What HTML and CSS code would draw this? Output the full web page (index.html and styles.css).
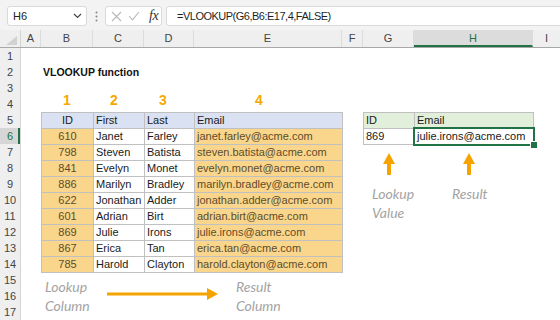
FILE: index.html
```html
<!DOCTYPE html>
<html>
<head>
<meta charset="utf-8">
<link rel="stylesheet" href="styles.css">
</head>
<body>
<div class="app">
  <div class="fbar">
    <div class="namebox"><span>H6</span>
      <svg class="chev" width="9" height="6" viewBox="0 0 9 6"><path d="M1 1 L4.5 4.5 L8 1" fill="none" stroke="#444" stroke-width="1.2"/></svg>
    </div>
    <div class="grip"><svg width="3" height="11" viewBox="0 0 3 11"><circle cx="1.5" cy="1.5" r="1" fill="#888"/><circle cx="1.5" cy="5.5" r="1" fill="#888"/><circle cx="1.5" cy="9.5" r="1" fill="#888"/></svg></div>
    <div class="fxbox">
      <svg width="11" height="11" viewBox="0 0 11 11"><path d="M1 1 L10 10 M10 1 L1 10" stroke="#b8b8b8" stroke-width="1.1"/></svg>
      <svg width="12" height="10" viewBox="0 0 12 10"><path d="M1 5 L4.5 8.8 L11 1" fill="none" stroke="#b8b8b8" stroke-width="1.1"/></svg>
      <span class="fx">fx</span>
    </div>
    <div class="formula">=VLOOKUP(G6,B6:E17,4,FALSE)</div>
  </div>
  <div class="colheads">
    <div class="corner"><span class="tri"></span></div>
    <div class="ch wa">A</div>
    <div class="ch wb">B</div>
    <div class="ch wc">C</div>
    <div class="ch wd">D</div>
    <div class="ch we">E</div>
    <div class="ch wf">F</div>
    <div class="ch wg">G</div>
    <div class="ch wh active">H</div>
    <div class="ch wi">I</div>
  </div>
  <div class="body">
    <div class="rowheads">
      <div class="rh">1</div><div class="rh">2</div><div class="rh">3</div><div class="rh">4</div>
      <div class="rh">5</div><div class="rh active">6</div><div class="rh">7</div><div class="rh">8</div>
      <div class="rh">9</div><div class="rh">10</div><div class="rh">11</div><div class="rh">12</div>
      <div class="rh">13</div><div class="rh">14</div><div class="rh">15</div><div class="rh">16</div>
      <div class="rh">17</div>
    </div>
    <div class="canvas">
      <div class="title">VLOOKUP function</div>
      <div class="num n1">1</div>
      <div class="num n2">2</div>
      <div class="num n3">3</div>
      <div class="num n4">4</div>

      <div class="dtable">
        <div class="c h ctr">ID</div><div class="c h">First</div><div class="c h">Last</div><div class="c h">Email</div>
        <div class="c o ctr">610</div><div class="c">Janet</div><div class="c">Farley</div><div class="c o">janet.farley@acme.com</div>
        <div class="c o ctr">798</div><div class="c">Steven</div><div class="c">Batista</div><div class="c o">steven.batista@acme.com</div>
        <div class="c o ctr">841</div><div class="c">Evelyn</div><div class="c">Monet</div><div class="c o">evelyn.monet@acme.com</div>
        <div class="c o ctr">886</div><div class="c">Marilyn</div><div class="c">Bradley</div><div class="c o">marilyn.bradley@acme.com</div>
        <div class="c o ctr">622</div><div class="c">Jonathan</div><div class="c">Adder</div><div class="c o">jonathan.adder@acme.com</div>
        <div class="c o ctr">601</div><div class="c">Adrian</div><div class="c">Birt</div><div class="c o">adrian.birt@acme.com</div>
        <div class="c o ctr">869</div><div class="c">Julie</div><div class="c">Irons</div><div class="c o">julie.irons@acme.com</div>
        <div class="c o ctr">867</div><div class="c">Erica</div><div class="c">Tan</div><div class="c o">erica.tan@acme.com</div>
        <div class="c o ctr">785</div><div class="c">Harold</div><div class="c">Clayton</div><div class="c o">harold.clayton@acme.com</div>
      </div>

      <div class="rtable">
        <div class="c g">ID</div><div class="c g">Email</div>
        <div class="c">869</div><div class="c sel">julie.irons@acme.com</div>
      </div>

      <div class="overlay">
        <svg class="arr-h" width="112" height="12" viewBox="0 0 112 12"><rect x="0" y="4.5" width="101" height="3" fill="#f5a300"/><polygon points="100,0 111,6 100,12" fill="#f5a300"/></svg>
        <svg class="arr-u u1" width="12" height="22" viewBox="0 0 12 22"><polygon points="6,0 12,11 0,11" fill="#f5a300"/><rect x="4" y="10" width="4" height="12" fill="#f5a300"/></svg>
        <svg class="arr-u u2" width="12" height="22" viewBox="0 0 12 22"><polygon points="6,0 12,11 0,11" fill="#f5a300"/><rect x="4" y="10" width="4" height="12" fill="#f5a300"/></svg>
        <div class="note lk-col">Lookup<br>Column</div>
        <div class="note rs-col">Result<br>Column</div>
        <div class="note lk-val">Lookup<br>Value</div>
        <div class="note rs">Result</div>
      </div>
    </div>
  </div>
</div>
</body>
</html>
```

FILE: styles.css
```css
* { box-sizing: border-box; margin: 0; padding: 0; }
body {
  margin: 0;
  width: 560px;
  height: 320px;
  overflow: hidden;
  background: #fff;
  font-family: "Liberation Sans", Arial, sans-serif;
  font-size: 11px;
  color: #222;
}
.app { width: 560px; height: 320px; overflow: hidden; }

/* formula bar */
.fbar {
  height: 30px;
  background: #f3f3f3;
  display: flex;
  align-items: flex-start;
  padding: 6px 0 0 7px;
}
.namebox {
  width: 80px;
  height: 20px;
  background: #fff;
  border: 1px solid #dadada;
  border-radius: 3px;
  display: flex;
  align-items: center;
  justify-content: space-between;
  padding: 0 4px 0 5px;
  font-size: 11px;
  color: #222;
}
.grip {
  width: 18px;
  height: 20px;
  display: flex;
  align-items: center;
  justify-content: center;
}
.fxbox {
  width: 57px;
  height: 20px;
  background: #fff;
  border: 1px solid #dadada;
  border-radius: 3px;
  display: flex;
  align-items: center;
  gap: 6px;
  padding-left: 5px;
}
.fx {
  font-family: "Liberation Serif", serif;
  font-style: italic;
  font-size: 14px;
  color: #333;
  margin-left: 3px;
  letter-spacing: -0.5px;
}
.formula {
  flex: 1;
  margin-left: 4px;
  margin-right: -4px;
  height: 20px;
  background: #fff;
  border: 1px solid #dadada;
  border-radius: 3px 0 0 3px;
  padding-left: 10px;
  line-height: 18px;
  font-size: 11px;
  letter-spacing: -0.5px;
  color: #1f1f1f;
}

/* column headers */
.colheads {
  display: flex;
  height: 18px;
  background: #efefef;
  border-bottom: 1px solid #a8a8a8;
}
.corner {
  width: 21px;
  flex: none;
  border-right: 1px solid #d4d4d4;
  display: flex;
  align-items: flex-end;
  justify-content: flex-end;
  padding: 0 3px 2px 0;
}
.tri {
  width: 0;
  height: 0;
  border-left: 11px solid transparent;
  border-bottom: 9px solid #d2d2d2;
}
.ch {
  flex: none;
  text-align: center;
  line-height: 17px;
  color: #444;
  border-right: 1px solid #dcdcdc;
}
.ch.active {
  background: #dcdcdc;
  color: #217346;
  border-bottom: 2px solid #217346;
  line-height: 16px;
}
.wa { width: 20px; }
.wb { width: 52px; }
.wc { width: 51px; }
.wd { width: 50px; }
.we { width: 148px; }
.wf { width: 21px; }
.wg { width: 51px; }
.wh { width: 119px; }
.wi { flex: 1 !important; border-right: none; }

/* body */
.body { display: flex; }
.rowheads {
  width: 21px;
  flex: none;
  background: #efefef;
  border-right: 1px solid #d4d4d4;
}
.rh {
  height: 16px;
  line-height: 16px;
  text-align: center;
  color: #444;
  font-size: 11px;
}
.rh.active {
  background: #d6d6d6;
  color: #217346;
  box-shadow: inset -2px 0 0 #217346;
}

.canvas {
  flex: 1;
  position: relative;
  display: grid;
  grid-template-columns: 20px 52px 51px 50px 148px 21px 51px 119px 27px;
  grid-template-rows: repeat(17, 16px);
}
.title {
  grid-row: 2;
  grid-column: 2 / 6;
  padding-left: 2px;
  font-weight: bold;
  font-size: 10.5px;
  line-height: 16px;
  color: #111;
}
.num {
  grid-row: 4;
  align-self: start;
  margin-top: -4px;
  font-family: "Liberation Sans", Arial, sans-serif;
  font-weight: bold;
  font-size: 14px;
  line-height: 16px;
  color: #f5a800;
}
.n1 { grid-column: 2; padding-left: 22px; }
.n2 { grid-column: 3; padding-left: 17px; }
.n3 { grid-column: 4; padding-left: 15px; }
.n4 { grid-column: 5; padding-left: 61px; }

.dtable {
  grid-row: 5 / 15;
  grid-column: 2 / 6;
  display: grid;
  grid-template-columns: 51px 50px 49px 147px;
  grid-auto-rows: 15px;
  gap: 1px;
  background: #c0c0c0;
  border: 1px solid #c0c0c0;
  margin: 0 -1px -1px 0;
}
.rtable {
  grid-row: 5 / 7;
  grid-column: 7 / 9;
  display: grid;
  grid-template-columns: 50px 118px;
  grid-auto-rows: 15px;
  gap: 1px;
  background: #c0c0c0;
  border: 1px solid #c0c0c0;
  margin: 0 -1px -1px 0;
}
.c {
  background: #fff;
  line-height: 15px;
  padding-left: 2px;
  white-space: nowrap;
  overflow: hidden;
  color: #1a1a1a;
}
.c.h { background: #d9e1f2; }
.c.g { background: #e2efda; }
.c.o { background: #f9d68b; color: #5e4c2c; }
.c.ctr { text-align: center; padding-left: 0; }
.c.sel { position: relative; overflow: visible; }
.c.sel::after {
  content: "";
  position: absolute;
  top: -2px; left: -2px; right: -2px; bottom: -2px;
  border: 2px solid #217346;
}
.c.sel::before {
  content: "";
  position: absolute;
  right: -5px;
  bottom: -5px;
  width: 6px;
  height: 6px;
  background: #217346;
  border: 1px solid #fff;
  z-index: 2;
}

/* floating shapes */
.overlay {
  position: absolute;
  top: 0; left: 0; right: 0; bottom: 0;
  pointer-events: none;
}
.arr-h { position: absolute; left: 86px; top: 240px; }
.arr-u { position: absolute; top: 105px; }
.u1 { left: 362px; }
.u2 { left: 442px; }
.note {
  position: absolute;
  font-family: Lato, "Open Sans", sans-serif;
  font-style: italic;
  font-size: 14px;
  line-height: 19px;
  color: #a3a3a3;
}
.lk-col { left: 24px; top: 229px; }
.rs-col { left: 215px; top: 229px; }
.lk-val { left: 351px; top: 136px; }
.rs { left: 431px; top: 136px; }
```
